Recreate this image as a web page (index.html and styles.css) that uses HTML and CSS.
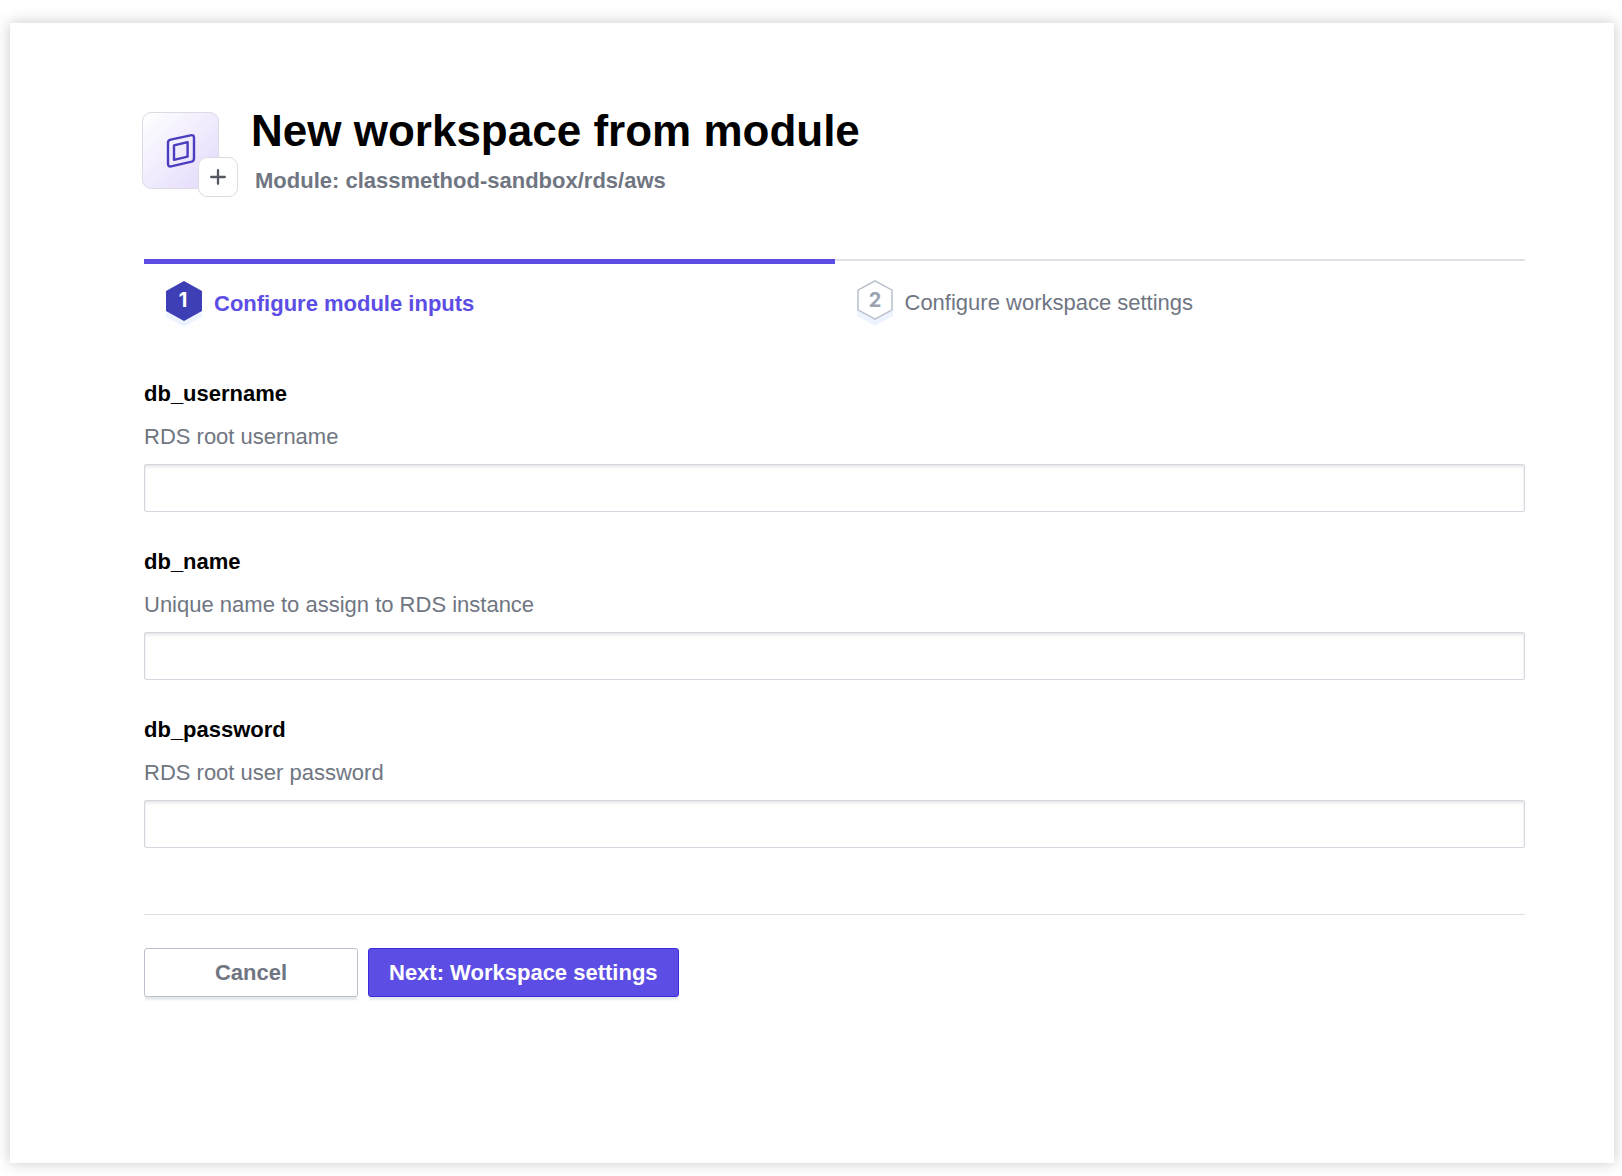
FILE: index.html
```html
<!DOCTYPE html>
<html lang="en">
<head>
<meta charset="utf-8">
<meta name="viewport" content="width=device-width, initial-scale=1">
<title>New workspace from module</title>
<link rel="stylesheet" href="styles.css">
</head>
<body>
<main class="card">
  <header class="header">
    <div class="module-icon">
      <svg class="module-glyph" viewBox="0 0 30 36" fill="none" stroke="#4a3dbf" stroke-width="2.4" stroke-linejoin="round" aria-hidden="true">
        <path d="M4.6 6.7 24.6 2.3Q28 1.6 28 4.8V25.4Q28 28 25.6 28.7L5.2 33.4Q2 34 2 30.6V9.6Q2 7.3 4.6 6.7Z"/>
        <path d="M8 12.4 21.6 9.2V23.6L8 26.8Z"/>
      </svg>
      <span class="plus-badge">
        <svg class="plus-glyph" viewBox="0 0 16 16" fill="none" stroke="#525761" stroke-width="2.3" stroke-linecap="round" aria-hidden="true">
          <path d="M8 1.2V14.8M1.2 8H14.8"/>
        </svg>
      </span>
    </div>
    <div class="heading">
      <h1 class="title">New workspace from module</h1>
      <p class="subtitle">Module: classmethod-sandbox/rds/aws</p>
    </div>
  </header>

  <ol class="steps">
    <li class="step step-active" aria-current="step">
      <svg class="hexagon" viewBox="0 0 36 46" aria-hidden="true">
        <path d="M0 16 18 6 36 16V36L18 46 0 36Z" fill="#edf4ff"/>
        <path d="M0 10 18 0 36 10V30L18 40 0 30Z" fill="#3e3eb5"/>
        <text class="step-number" x="17" y="26" fill="#fff">1</text>
      </svg>
      <span class="step-label">Configure module inputs</span>
    </li>
    <li class="step">
      <svg class="hexagon" viewBox="0 0 36 46" aria-hidden="true">
        <path d="M0 16 18 6 36 16V36L18 46 0 36Z" fill="#edf4ff"/>
        <path d="M1 10.2 18 .8 35 10.2V29.8L18 39.2 1 29.8Z" fill="#fff" stroke="#bac1cc" stroke-width="1.5"/>
        <text class="step-number" x="18" y="27" fill="#9ba3af">2</text>
      </svg>
      <span class="step-label">Configure workspace settings</span>
    </li>
  </ol>

  <form class="form">
    <div class="field">
      <label class="label" for="db_username">db_username</label>
      <p class="hint" id="db_username_hint">RDS root username</p>
      <input class="input" id="db_username" type="text" aria-describedby="db_username_hint">
    </div>
    <div class="field">
      <label class="label" for="db_name">db_name</label>
      <p class="hint" id="db_name_hint">Unique name to assign to RDS instance</p>
      <input class="input" id="db_name" type="text" aria-describedby="db_name_hint">
    </div>
    <div class="field">
      <label class="label" for="db_password">db_password</label>
      <p class="hint" id="db_password_hint">RDS root user password</p>
      <input class="input" id="db_password" type="text" aria-describedby="db_password_hint">
    </div>
    <div class="actions">
      <button class="button button-cancel" type="button">Cancel</button>
      <button class="button button-next" type="submit">Next: Workspace settings</button>
    </div>
  </form>
</main>
</body>
</html>
```
FILE: styles.css
```css
* {
  box-sizing: border-box;
}

body {
  display: flex;
  min-height: 100vh;
  margin: 0;
  padding: 23px 8px 13px 10px;
  background: #fff;
  color: #000;
  font: 22px/26px "Liberation Sans", Arial, sans-serif;
}

.card {
  flex: 1;
  min-width: 0;
  padding: 83px 89px 83px 134px;
  background: #fff;
  box-shadow: 0 0 14px rgba(0, 0, 0, 0.22);
}

.header {
  display: flex;
  gap: 32px;
  margin-left: -2px;
}

.module-icon {
  position: relative;
  display: flex;
  flex: none;
  align-items: center;
  justify-content: center;
  width: 77px;
  height: 77px;
  margin-top: 6px;
  border: 1px solid #dcdae3;
  border-radius: 9px;
  background: linear-gradient(135deg, #fff, #e2d8fb);
}

.module-glyph {
  width: 30px;
  height: 36px;
}

.plus-badge {
  position: absolute;
  right: -20px;
  bottom: -9px;
  display: flex;
  align-items: center;
  justify-content: center;
  width: 40px;
  height: 40px;
  border: 1px solid #dcdce2;
  border-radius: 9px;
  background: #fff;
}

.plus-glyph {
  width: 16px;
  height: 16px;
}

.title {
  margin: 0;
  font-size: 44px;
  line-height: 50px;
}

.subtitle {
  margin: 12px 0 0 4px;
  color: #6f7682;
  font-weight: bold;
}

.steps {
  display: flex;
  margin: 65px 0 0;
  padding: 0;
  list-style: none;
}

.step {
  display: flex;
  flex: 1;
  gap: 12px;
  padding: 19px 22px 0;
  border-top: 2px solid #dfdfe6;
  color: #6f7682;
}

.step-active {
  padding-top: 17px;
  border-top: 5px solid #5c4ee5;
  color: #5c4ee5;
  font-weight: bold;
}

.hexagon {
  flex: none;
  width: 36px;
  height: 46px;
}

.step-number {
  font: bold 20px Inter, sans-serif;
  text-anchor: middle;
}

.step-label {
  padding-top: 10px;
}

.form {
  margin-top: 54px;
}

.field {
  margin-bottom: 37px;
}

.label {
  display: block;
  font-weight: bold;
}

.hint {
  margin: 17px 0 14px;
  color: #6f7682;
}

.input {
  display: block;
  width: 100%;
  height: 48px;
  padding: 0 12px;
  border: 1px solid #d3d7e0;
  border-radius: 2px;
  background: #fff;
  box-shadow: inset 0 2px 3px rgba(0, 0, 0, 0.1);
  color: #000;
  font: inherit;
}

.actions {
  display: flex;
  gap: 10px;
  margin-top: 66px;
  padding-top: 33px;
  border-top: 1px solid #dce0e6;
}

.button {
  height: 49px;
  padding: 0 20px;
  border: 1px solid;
  border-radius: 3px;
  box-shadow: 0 4px 2px -1px #e5e8eb;
  font: inherit;
  font-weight: bold;
}

.button-cancel {
  width: 214px;
  border-color: #bac1cc;
  background: #fff;
  color: #6f7682;
}

.button-next {
  border-color: #3d2be0;
  background: #5c4ee5;
  color: #fff;
}
```
